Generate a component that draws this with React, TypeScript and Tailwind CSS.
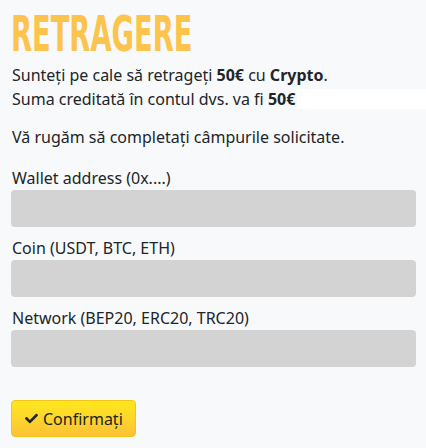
export default function App() {
  return (
    <div className="min-h-[448px] bg-[#f8f9fa] px-[11px] pr-[10px] text-[#212529] font-['Noto_Sans',sans-serif] text-[16px]">
      {/* Title */}
      <h1 className="pt-[7px] h-[63px] leading-[56px] text-[49px] font-bold text-[#fcc44c] font-['Liberation_Sans_Narrow','DejaVu_Sans_Condensed',sans-serif] origin-left scale-x-[0.62] whitespace-nowrap">
        RETRAGERE
      </h1>

      {/* Summary */}
      <div className="leading-[24px] pl-[1px]">
        <p>
          Sunteți pe cale să retrageți <b>50€</b> cu <b>Crypto</b>.
        </p>
        <div className="flex items-center">
          <span>
            Suma creditată în contul dvs. va fi <b>50€</b>
          </span>
          <div className="flex-1 h-[20px] bg-white -mr-[10px] ml-[2px]" />
        </div>
        <p className="mt-[14px]">Vă rugăm să completați câmpurile solicitate.</p>
      </div>

      {/* Fields */}
      <div className="mt-[17px] flex flex-col gap-[9px]">
        {["Wallet address (0x....)", "Coin (USDT, BTC, ETH)", "Network (BEP20, ERC20, TRC20)"].map((label) => (
          <label key={label} className="block">
            <span className="block leading-[24px] pl-[1px]">{label}</span>
            <input className="block w-full h-[37px] rounded-[4px] bg-[#d3d3d3] outline-none" />
          </label>
        ))}
      </div>

      {/* Submit */}
      <button className="mt-[33px] h-[37px] w-[125px] rounded-[4px] border border-[#f5c21a] bg-gradient-to-b from-[#fde81b] to-[#fbc234] flex items-center pl-[12px] gap-[4px] leading-none">
        <svg width="15" height="13" viewBox="0 0 512 512" className="fill-[#212529]">
          <path d="M173.9 439.4l-166.4-166.4c-10-10-10-26.2 0-36.2l36.2-36.2c10-10 26.2-10 36.2 0L192 312.7 432.1 72.6c10-10 26.2-10 36.2 0l36.2 36.2c10 10 10 26.2 0 36.2L210.1 439.4c-10 10-26.2 10-36.2 0z" />
        </svg>
        <span>Confirmați</span>
      </button>
    </div>
  );
}
